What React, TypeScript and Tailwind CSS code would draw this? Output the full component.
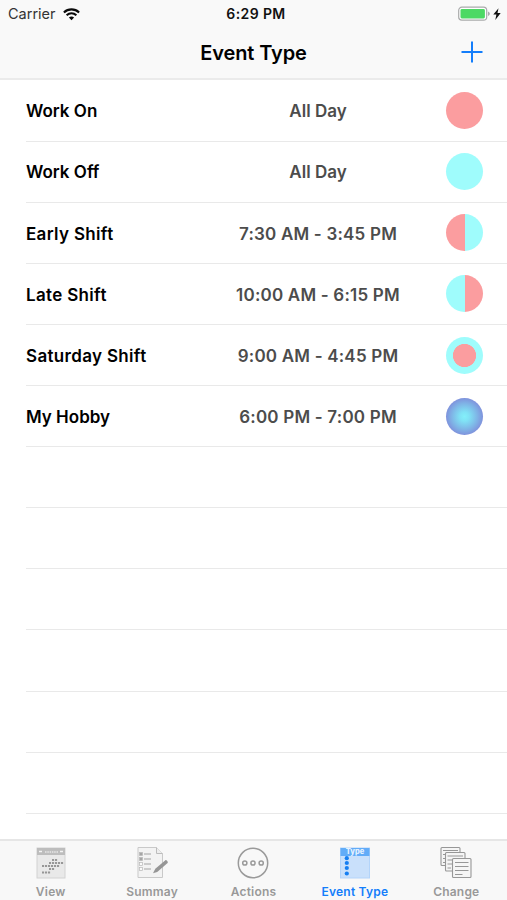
import React from 'react';
import clsx from 'clsx';

type Marker = 'on' | 'off' | 'early' | 'late' | 'ring' | 'glow';

interface EventType {
  name: string;
  time: string;
  marker: Marker;
}

const EVENT_TYPES: EventType[] = [
  { name: 'Work On', time: 'All Day', marker: 'on' },
  { name: 'Work Off', time: 'All Day', marker: 'off' },
  { name: 'Early Shift', time: '7:30 AM - 3:45 PM', marker: 'early' },
  { name: 'Late Shift', time: '10:00 AM - 6:15 PM', marker: 'late' },
  { name: 'Saturday Shift', time: '9:00 AM - 4:45 PM', marker: 'ring' },
  { name: 'My Hobby', time: '6:00 PM - 7:00 PM', marker: 'glow' },
];

const EMPTY_ROWS = 6;

const MARKER_STYLES: Record<Marker, string> = {
  on: 'bg-[#fb9d9f]',
  off: 'bg-[#9ffcfc]',
  early: 'bg-[linear-gradient(90deg,#fb9d9f_50%,#9ffcfc_50%)]',
  late: 'bg-[linear-gradient(90deg,#9ffcfc_50%,#fb9d9f_50%)]',
  ring: 'bg-[radial-gradient(circle_closest-side,#fb9d9f_61%,#9ffcfc_64%)]',
  glow: 'bg-[radial-gradient(circle_closest-side,#83effa_0%,#80e2f5_25%,#7fb4e6_70%,#7f92dc_100%)]',
};

function StatusBar() {
  return (
    <div className="grid h-7 grid-cols-3 items-center pl-[8px] pr-[5px] text-[14.5px] text-[#111]">
      <div className="flex items-center gap-[7px] text-[#333]">
        <span>Carrier</span>
        <svg width="17" height="13" viewBox="0 0 17 13" fill="none" stroke="#0a0a0a" strokeWidth="2.1">
          <path d="M0.9 4.4C5.2 0.4 11.8 0.4 16.1 4.4" />
          <path d="M3.6 7.3C6.5 4.7 10.5 4.7 13.4 7.3" />
          <path d="M5.9 9.5C7.4 8.2 9.6 8.2 11.1 9.5L8.5 12.2Z" fill="#0a0a0a" stroke="none" />
        </svg>
      </div>
      <span className="pb-0.5 pl-0.5 text-center text-[14px] font-semibold tracking-[0.4px]">6:29 PM</span>
      <div className="flex items-center justify-end pb-px">
        <svg width="44" height="16" viewBox="0 0 44 16">
          <rect x="0.7" y="1.2" width="28" height="13" rx="3.2" fill="#fff" stroke="#a9aaab" strokeWidth="1.2" />
          <rect x="2.5" y="3" width="24.4" height="9.5" rx="1.4" fill="#4cd964" />
          <path d="M30 5.5C32.4 6.3 32.4 9.2 30 10Z" fill="#a9aaab" />
          <path d="M40.5 2.2L35.3 8.6H38.4L37.3 14L42.7 7.1H39.5Z" fill="#111" />
        </svg>
      </div>
    </div>
  );
}

function ViewIcon() {
  const dots = [
    [18, 13], [21, 13], [15, 16], [18, 16], [21, 16], [24, 16], [27, 16],
    [8, 19], [11, 19], [14, 19], [17, 19], [20, 19], [23, 19],
    [15, 22], [18, 22], [8, 25.5], [11, 25.5], [14, 25.5],
  ];
  return (
    <svg width="32" height="34" viewBox="0 0 32 34">
      <rect x="2" y="2" width="28" height="30" fill="#e9e9e9" stroke="#d2d2d2" />
      <rect x="2" y="2" width="28" height="7" fill="#bdbdbd" />
      <path d="M4 5.5H7M25 5.5H28" stroke="#f4f4f4" strokeWidth="1.5" />
      <path d="M10 6H23" stroke="#dcdcdc" strokeWidth="2" strokeDasharray="1.5 0.8" />
      {dots.map(([x, y]) => (
        <rect key={`${x}-${y}`} x={x - 1} y={y} width="2.1" height="2" fill="#979797" />
      ))}
    </svg>
  );
}

function SummaryIcon() {
  return (
    <svg width="32" height="34" viewBox="0 0 32 34" fill="none">
      <path d="M2 1.5H20.5L26.5 7.5V31.5H2Z" fill="#f3f3f3" stroke="#c9c9c9" />
      <path d="M20.5 1.5V7.5H26.5" fill="#eee" stroke="#bcbcbc" />
      {[8, 13, 18, 23].map((y, i) => (
        <g key={y}>
          <rect x="3.5" y={y - 1.5} width="3" height="3" fill={i < 2 ? '#a6a6a6' : '#fafafa'} stroke="#b8b8b8" strokeWidth="0.7" />
          <path d={`M8 ${y}H15`} stroke="#b0b0b0" strokeWidth="1.2" />
        </g>
      ))}
      <path d="M17 27.2L19.3 22.8L29.4 14.2C30.4 13.6 32.4 16 31.6 17L21.2 25.9Z" fill="#969696" />
    </svg>
  );
}

function ActionsIcon() {
  return (
    <svg width="32" height="34" viewBox="0 0 32 34" fill="none" stroke="#9a9a9a">
      <circle cx="16" cy="17" r="14.7" strokeWidth="1.5" />
      <circle cx="7.8" cy="17" r="2.1" strokeWidth="1.5" />
      <circle cx="16" cy="17" r="2.1" strokeWidth="1.5" />
      <circle cx="24.2" cy="17" r="2.1" strokeWidth="1.5" />
    </svg>
  );
}

function TypeIcon() {
  return (
    <svg width="32" height="34" viewBox="0 0 32 34">
      <rect x="1.5" y="2" width="29" height="30" fill="#c9e0fb" stroke="#b3d4fa" />
      <rect x="1.5" y="2" width="29" height="8" fill="#62acf8" />
      <text x="16" y="8.4" textAnchor="middle" fill="#e6f2ff" className="text-[7.5px] font-extrabold">
        Type
      </text>
      {[12.2, 17, 22, 27.5].map((y) => (
        <circle key={y} cx="7.8" cy={y} r="2.1" fill="#167ff2" />
      ))}
    </svg>
  );
}

function ChangeIcon() {
  return (
    <svg width="34" height="34" viewBox="0 0 34 34" fill="#f5f5f5" stroke="#979797" strokeWidth="1.1">
      <rect x="2" y="1.5" width="19" height="18" rx="1" />
      <path d="M4 4.5H19M4 8.5H8M4 12.5H8M4 16.5H6" />
      <rect x="6.5" y="6.5" width="19.5" height="18.5" rx="1" />
      <path d="M8.5 10H24M8.5 14H13M8.5 18H13M8.5 22H12" />
      <rect x="13.5" y="12.5" width="18.5" height="19" rx="1" />
      <path d="M16 16.5H29.5M16 20.5H29.5M16 24.5H29.5M16 28.5H23.5" />
    </svg>
  );
}

const TABS = [
  { label: 'View', icon: ViewIcon },
  { label: 'Summay', icon: SummaryIcon },
  { label: 'Actions', icon: ActionsIcon },
  { label: 'Event Type', icon: TypeIcon },
  { label: 'Change', icon: ChangeIcon },
];

export default function App() {
  const activeTab = 'Event Type';

  return (
    <div className="flex h-[900px] w-[507px] flex-col overflow-hidden bg-white font-['Inter','Liberation_Sans',sans-serif] text-black">
      <header className="h-20 shrink-0 border-b-2 border-[#ebebeb] bg-[#f9f9f9]">
        <StatusBar />
        <div className="grid h-12 grid-cols-[1fr_auto_1fr] items-center pr-6">
          <h1 className="col-start-2 pl-6 pt-px text-[20px] font-semibold tracking-[-0.1px]">Event Type</h1>
          <button className="justify-self-end" aria-label="Add event type">
            <svg width="22" height="22" viewBox="0 0 22 22" stroke="#147efb" strokeWidth="2">
              <path d="M11 0.5V21.5M0.5 11H21.5" />
            </svg>
          </button>
        </div>
      </header>

      {/* Event type list */}
      <main className="min-h-0 flex-1 overflow-hidden pl-[26px] pt-[0.6px]">
        {EVENT_TYPES.map((event) => (
          <div
            key={event.name}
            className="grid h-[61.1px] grid-cols-[184px_216px_1fr] items-center border-b border-[#e9e9e9]"
          >
            <span
              className={clsx(
                'pt-[3px] text-[17px] font-semibold',
                event.name.endsWith('Shift') && 'tracking-[0.33px]'
              )}
            >
              {event.name}
            </span>
            <span
              className={clsx(
                'pt-[3px] text-center text-[17px] font-semibold text-[#4c4c4c]',
                event.time !== 'All Day' && 'tracking-[0.2px]'
              )}
            >
              {event.time}
            </span>
            <span className={clsx('ml-5 size-[37px] rounded-full', MARKER_STYLES[event.marker])} />
          </div>
        ))}
        {Array.from({ length: EMPTY_ROWS }, (_, i) => (
          <div key={i} className="h-[61.1px] border-b border-[#e9e9e9]" />
        ))}
      </main>

      <nav className="grid h-[61px] shrink-0 grid-cols-5 border-t-2 border-[#e6e6e6] bg-[#f8f8f8]">
        {TABS.map(({ label, icon: Icon }) => (
          <div
            key={label}
            className={clsx(
              'flex flex-col items-center pt-[5px] text-[12px] font-semibold leading-4',
              label === activeTab ? 'text-[#147efb]' : 'text-[#999]'
            )}
          >
            <Icon />
            <span className="mt-1 whitespace-nowrap tracking-[0.2px]">{label}</span>
          </div>
        ))}
      </nav>
    </div>
  );
}
